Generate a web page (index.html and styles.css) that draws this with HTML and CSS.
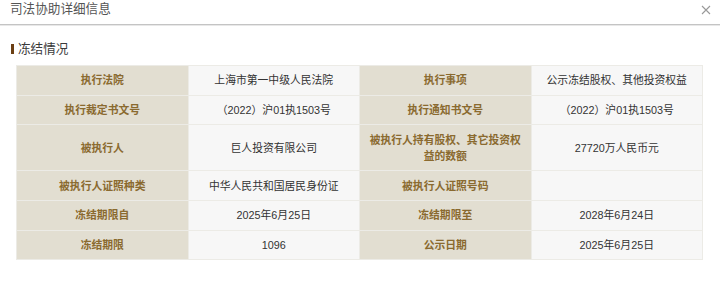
FILE: index.html
```html
<!DOCTYPE html>
<html lang="zh">
<head>
<meta charset="utf-8">
<link rel="stylesheet" href="styles.css">
</head>
<body>
<div class="dialog">
  <div class="header">
    <span class="title">司法协助详细信息</span>
    <span class="close">
      <svg width="10" height="10" viewBox="0 0 10 10"><path d="M1 1L9 9M9 1L1 9" stroke="#999" stroke-width="1.1" fill="none"/></svg>
    </span>
  </div>
  <div class="section">
    <div class="section-title"><span class="bar"></span>冻结情况</div>
    <table class="info">
      <tr class="r1"><th>执行法院</th><td>上海市第一中级人民法院</td><th>执行事项</th><td>公示冻结股权、其他投资权益</td></tr>
      <tr class="r2"><th>执行裁定书文号</th><td>（2022）沪01执1503号</td><th>执行通知书文号</th><td>（2022）沪01执1503号</td></tr>
      <tr class="r3"><th>被执行人</th><td>巨人投资有限公司</td><th>被执行人持有股权、其它投资权益的数额</th><td>27720万人民币元</td></tr>
      <tr class="r4"><th>被执行人证照种类</th><td>中华人民共和国居民身份证</td><th>被执行人证照号码</th><td></td></tr>
      <tr class="r5"><th>冻结期限自</th><td>2025年6月25日</td><th>冻结期限至</th><td>2028年6月24日</td></tr>
      <tr class="r6"><th>冻结期限</th><td>1096</td><th>公示日期</th><td>2025年6月25日</td></tr>
    </table>
  </div>
</div>
</body>
</html>
```

FILE: styles.css
```css
html, body {
  margin: 0;
  padding: 0;
  background: #fff;
}
body {
  font-family: "Liberation Sans", "Noto Sans CJK SC", sans-serif;
  width: 720px;
  height: 281px;
  overflow: hidden;
}
.header {
  height: 24px;
  border-bottom: 1px solid #c4c4c4;
  box-shadow: 0 1px 0 #e8e8e8;
  display: flex;
  align-items: flex-start;
  justify-content: space-between;
  padding: 0 9px 0 10px;
}
.title {
  font-size: 12.6px;
  line-height: 18px;
  color: #555;
}
.close {
  display: flex;
  margin-top: 5px;
}
.section {
  padding: 15px 17px 0 11px;
}
.section-title {
  display: flex;
  align-items: center;
  font-size: 12.6px;
  line-height: 18px;
  color: #3a3a3a;
}
.bar {
  width: 3px;
  height: 10px;
  background: #6b3f14;
  margin-right: 4px;
}
.info {
  margin: 7px 0 0 5px;
  width: 687px;
  table-layout: fixed;
  border-collapse: collapse;
  font-size: 10.8px;
}
.info th, .info td {
  border: 1px solid #ecebe6;
  text-align: center;
  height: 28.7px;
  padding: 0 8px;
  line-height: 16px;
}
.info th {
  background: #e2ded1;
  color: #8a6a2f;
  font-weight: bold;
}
.info td {
  background: #f7f7f7;
  color: #333;
}
.info .r3 th, .info .r3 td {
  height: 45px;
}
```
